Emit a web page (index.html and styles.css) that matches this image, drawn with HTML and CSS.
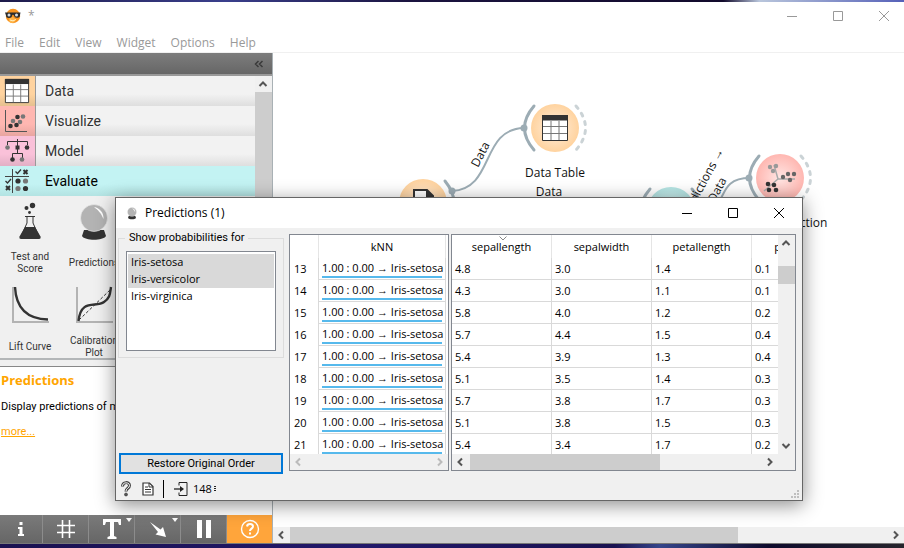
FILE: index.html
```html
<!DOCTYPE html>
<html lang="en">
<head>
<meta charset="utf-8">
<title>Orange</title>
<link rel="stylesheet" href="styles.css">
</head>
<body>
<svg class="defs" aria-hidden="true">
  <defs>
    <radialGradient id="gOrange"><stop offset="0" stop-color="#ffeedd"/><stop offset="1" stop-color="#ffd39f"/></radialGradient>
    <radialGradient id="gRed"><stop offset="0" stop-color="#ffe6e4"/><stop offset="1" stop-color="#ffb7b1"/></radialGradient>
    <radialGradient id="gCyan"><stop offset="0" stop-color="#dff6f6"/><stop offset="1" stop-color="#b3e3e2"/></radialGradient>
    <symbol id="up" viewBox="0 0 16 16"><path d="M4.500 10L8 6.500l3.500 3.500" fill="none" stroke="currentColor" stroke-width="2"/></symbol>
    <symbol id="down" viewBox="0 0 16 16"><path d="M4.500 6L8 9.500 11.500 6" fill="none" stroke="currentColor" stroke-width="2"/></symbol>
    <symbol id="left" viewBox="0 0 16 16"><path d="M10 4.500L6.500 8l3.500 3.500" fill="none" stroke="currentColor" stroke-width="2"/></symbol>
    <symbol id="right" viewBox="0 0 16 16"><path d="M6 4.500L9.500 8 6 11.500" fill="none" stroke="currentColor" stroke-width="2"/></symbol>
    <symbol id="min" viewBox="0 0 12 12"><path d="M1 6.500h10" stroke="currentColor"/></symbol>
    <symbol id="max" viewBox="0 0 12 12"><path d="M1.500 1.500h9v9h-9z" fill="none" stroke="currentColor"/></symbol>
    <symbol id="close" viewBox="0 0 12 12"><path d="M1 1l10 10M11 1L1 11" stroke="currentColor"/></symbol>
    <symbol id="table" viewBox="0 0 28 28"><path d="M1.500 1.500h25v25h-25z" fill="#fff" stroke="#333"/><path d="M1 1h26v5.500H1z" fill="#333"/><path d="M2 12.500h24M2 19.500h24M10 7v19M18 7v19" stroke="#777"/></symbol>
    <symbol id="ball" viewBox="0 0 36 40"><path d="M8 29h20l2 6c-3 5-21 5-24 0z" fill="#333"/><circle cx="18" cy="17" r="13.500" fill="#b3b3b3" stroke="#eee" stroke-width="0.600"/><path d="M18 6c6 1 10 6 9.500 12C25 12 22 9 18 6z" fill="#fff"/></symbol>
  </defs>
</svg>
<header class="titlebar">
  <svg class="logo" width="16" height="16" viewBox="0 0 16 16"><circle cx="8" cy="8" r="7.200" fill="#f7931e"/><circle cx="7" cy="12" r="3" fill="#ffb347"/><path d="M0 4.500h15.500l-.5 2.500a3 2.500 0 0 1-6 .5L8 6.500l-1 1a3 2.500 0 0 1-6 0z" fill="#2b2b2b"/><circle cx="4" cy="7" r="1.500" fill="#d5dce2"/><circle cx="11.500" cy="7" r="1.500" fill="#d5dce2"/><path d="M5 12q3 2 6-.5" fill="none" stroke="#fff3c4"/></svg>
  <span class="doc">*</span>
  <div class="winbtns">
    <button aria-label="Minimize"><svg width="12" height="12"><use href="#min"/></svg></button>
    <button aria-label="Maximize"><svg width="12" height="12"><use href="#max"/></svg></button>
    <button aria-label="Close"><svg width="12" height="12"><use href="#close"/></svg></button>
  </div>
</header>
<nav class="menu"><a href="#">File</a><a href="#">Edit</a><a href="#">View</a><a href="#">Widget</a><a href="#">Options</a><a href="#">Help</a></nav>
<main class="main">
  <aside class="side">
    <button class="collapse" aria-label="Collapse"><svg width="10" height="8" viewBox="0 0 10 8"><path d="M4.500 1L1.500 4l3 3M8.500 1l-3 3 3 3" fill="none" stroke="#3a3a3a" stroke-width="1.500"/></svg></button>
    <div class="tools">
      <div class="toolist">
        <button class="cat data"><span><svg width="26" height="26"><use href="#table"/></svg></span>Data</button>
        <button class="cat visual"><span><svg width="24" height="24" viewBox="0 0 24 24"><path d="M1.500 1v21.500H23" fill="none" stroke="#555"/><g fill="#333"><circle cx="6.500" cy="17" r="2.300"/><circle cx="12.500" cy="16" r="2.300"/><circle cx="13.500" cy="8" r="2.300"/></g><g fill="#777"><circle cx="9" cy="12" r="2.300"/><circle cx="16" cy="13" r="2.300"/><circle cx="19" cy="7.500" r="2.300"/></g></svg></span>Visualize</button>
        <button class="cat model"><span><svg width="26" height="26" viewBox="0 0 26 26"><path d="M3.500 7V3.500h20V7M13.500 1v7M8.500 20v-4.500h10V20M13.500 10v5" fill="none" stroke="#333"/><path d="M11.500 7.500h4v4h-4z" fill="#333"/><circle cx="3.500" cy="9.500" r="2.300" fill="#777"/><circle cx="23" cy="9.500" r="2.300" fill="#333"/><circle cx="8.500" cy="21.500" r="2.300" fill="#333"/><circle cx="18" cy="21.500" r="2.300" fill="#777"/></svg></span>Model</button>
        <button class="cat eval"><span><svg width="26" height="26" viewBox="0 0 26 26"><path d="M1 8.500h24M8.500 1v24" stroke="#444"/><path d="M11.500 3.500l2 2 3.500-4M1.500 13l2 2 3.500-4" fill="none" stroke="#333" stroke-width="1.300"/><path d="M19.500 2l4 4m0-4l-4 4M2 18l4 4m0-4l-4 4" stroke="#333" stroke-width="2"/><circle cx="14" cy="13" r="2.600" fill="#333"/><circle cx="21.500" cy="13" r="2.600" fill="#777"/><circle cx="14" cy="20.500" r="2.600" fill="#777"/><circle cx="21.500" cy="20.500" r="2.600" fill="#333"/></svg></span>Evaluate</button>
        <div class="widgets">
          <button><svg width="36" height="40" viewBox="0 0 36 40"><circle cx="14.500" cy="7" r="2" fill="#333"/><circle cx="20.500" cy="4.500" r="2.700" fill="#333"/><circle cx="17.500" cy="11.500" r="1.400" fill="#333"/><path d="M13 15.500h10M15 16v6L8.500 36.500h19L21 22v-6" fill="none" stroke="#333"/><path d="M13 26h10l5.500 9.500q.5 2.500-1.500 2.500H9q-2 0-1.500-2.500z" fill="#333"/></svg><span>Test and<br>Score</span></button>
          <button><svg width="36" height="40"><use href="#ball"/></svg><span>Predictions</span></button>
          <button><svg width="38" height="40" viewBox="0 0 38 40"><path d="M2 2v35h36" fill="none" stroke="#b3b3b3" stroke-width="2"/><path d="M4 2c1 21 12 32 33 32.500" fill="none" stroke="#333" stroke-width="2.400"/></svg><span>Lift Curve</span></button>
          <button><svg width="38" height="40" viewBox="0 0 38 40"><path d="M2 2v35h36" fill="none" stroke="#b3b3b3" stroke-width="2"/><path d="M4 35L36 4" stroke="#333" stroke-dasharray="3 2"/><path d="M3.500 36C6 13 21 23 29 17c6-4 6-8 7-15" fill="none" stroke="#333" stroke-width="2.400"/></svg><span>Calibration<br>Plot</span></button>
        </div>
      </div>
      <div class="vbar side-bar"><svg width="16" height="16"><use href="#up"/></svg><i></i></div>
    </div>
    <div class="split"></div>
    <article class="help">
      <h2>Predictions</h2>
      <p>Display predictions of models for an input data set.</p>
      <a href="#">more...</a>
    </article>
    <div class="actions">
      <button aria-label="Info"><svg width="24" height="24" viewBox="0 0 24 24"><path d="M10.500 5h3v3h-3zM9 10h4.500v7H15v2H9v-2h1.500v-5H9z" fill="#fff"/></svg></button>
      <button aria-label="Grid"><svg width="24" height="24" viewBox="0 0 24 24"><path d="M8.500 3v18M15.500 3v18M3 8.500h18M3 15.500h18" stroke="#fff" stroke-width="1.600"/></svg></button>
      <button aria-label="Text"><svg width="24" height="24" viewBox="0 0 24 24"><path d="M3 2h18v6h-2l-1-3h-4v14l2.500 1v2h-9v-2l2.500-1V5H6L5 8H3z" fill="#fff"/></svg><b></b></button>
      <button aria-label="Arrow"><svg width="24" height="24" viewBox="0 0 24 24"><path d="M4 5l10.500 7.500L17 10l3 10-10.500-2.500 2.500-2.500z" fill="#fff"/></svg><b></b></button>
      <button aria-label="Pause"><svg width="24" height="24" viewBox="0 0 24 24"><path d="M5 3h5v18H5zM14 3h5v18h-5z" fill="#fff"/></svg></button>
      <button class="on" aria-label="Help"><svg width="24" height="24" viewBox="0 0 24 24"><circle cx="12" cy="12" r="8.500" fill="none" stroke="#fff" stroke-width="1.400"/><path d="M9 9.500c.5-3.500 6-3 6 0 0 2-3 2.300-3 4.500M12 15.500v2" fill="none" stroke="#fff" stroke-width="2"/></svg></button>
    </div>
  </aside>
  <section class="work">
    <svg class="canvas" width="100%" height="100%">
      <g fill="none" stroke="#9cacb4" stroke-width="2">
        <path d="M179 138C222 136 207 76 251 75"/>
        <path d="M428 158C458 158 440 125 477 125"/>
      </g>
      <g transform="translate(282 75)">
        <circle r="24" fill="url(#gOrange)"/>
        <svg x="-14" y="-14" width="28" height="28"><use href="#table"/></svg>
        <path class="arc" d="M-21-22Q-40 0-21 22"/><circle class="dot" cx="-31" r="3.500"/>
        <path class="arc dash" d="M21-22Q40 0 21 22"/>
        <text y="49">Data Table</text>
      </g>
      <g transform="translate(150 150)">
        <circle r="24" fill="url(#gOrange)"/>
        <path d="M-9-13H4l6 6v18H-9z" fill="#fff" stroke="#333" stroke-width="2"/><path d="M3-14l8 8H3z" fill="#333"/>
        <path class="arc" d="M22-22Q40 0 22 22"/><circle class="dot" cx="29" cy="-12" r="3.500"/>
      </g>
      <g transform="translate(398 158)">
        <circle r="24" fill="url(#gCyan)"/>
        <path class="arc" d="M-21-22Q-40 0-21 22M21-22Q40 0 21 22"/>
      </g>
      <g transform="translate(507 125)">
        <circle r="24" fill="url(#gRed)"/>
        <path d="M-6-13L-2 1H15M-2 1l-14 12" fill="none" stroke="#aaa" stroke-width="1.500"/>
        <g fill="#999"><circle cx="-10" cy="-11" r="2.200"/><circle cx="-4" cy="-12" r="2.200"/><circle cx="-7" cy="-7" r="2.200"/></g>
        <g fill="#666"><circle cx="3" cy="-1" r="2.200"/><circle cx="8" cy="-4" r="2.200"/><circle cx="14" cy="-4" r="2.200"/><circle cx="10" cy="2" r="2.200"/></g>
        <g fill="#333"><circle cx="-12" cy="6" r="2.300"/><circle cx="-6" cy="7" r="2.300"/><circle cx="-11" cy="12" r="2.300"/><circle cx="-4" cy="12" r="2.300"/></g>
        <path class="arc" d="M-21-22Q-40 0-21 22"/><circle class="dot" cx="-31" r="3.500"/>
        <path class="arc dash" d="M21-22Q40 0 21 22"/>
        <text y="49">Linear Projection</text>
      </g>
      <text x="276" y="143">Data</text>
      <text class="start" transform="translate(205 115) rotate(-63)">Data</text>
      <text class="end" transform="translate(451 98) rotate(-62)">Predictions →</text>
      <text class="end" transform="translate(454 127) rotate(-62)">Data</text>
    </svg>
    <div class="hbar"><svg width="16" height="16"><use href="#left"/></svg><i></i><svg width="16" height="16"><use href="#right"/></svg></div>
  </section>
</main>

<section class="dialog" role="dialog" aria-labelledby="dlg">
  <header class="dtitle">
    <svg width="12" height="14"><use href="#ball"/></svg>
    <h1 id="dlg">Predictions (1)</h1>
    <div class="winbtns">
      <button aria-label="Minimize dialog"><svg width="12" height="12"><use href="#min"/></svg></button>
      <button aria-label="Maximize dialog"><svg width="12" height="12"><use href="#max"/></svg></button>
      <button aria-label="Close dialog"><svg width="12" height="12"><use href="#close"/></svg></button>
    </div>
  </header>
  <div class="dbody">
    <div class="left">
      <fieldset>
        <legend><label for="classes">Show probabibilities for</label></legend>
        <select id="classes" multiple size="5"><option selected>Iris-setosa</option><option selected>Iris-versicolor</option><option>Iris-virginica</option></select>
      </fieldset>
      <button class="restore">Restore Original Order</button>
    </div>
    <div class="frame preds">
      <div class="view">
        <table>
          <thead><tr><th class="num"></th><th>kNN</th></tr></thead>
          <tbody>
            <tr><th>13</th><td><span>1.00 : 0.00 → Iris-setosa</span></td></tr>
            <tr><th>14</th><td><span>1.00 : 0.00 → Iris-setosa</span></td></tr>
            <tr><th>15</th><td><span>1.00 : 0.00 → Iris-setosa</span></td></tr>
            <tr><th>16</th><td><span>1.00 : 0.00 → Iris-setosa</span></td></tr>
            <tr><th>17</th><td><span>1.00 : 0.00 → Iris-setosa</span></td></tr>
            <tr><th>18</th><td><span>1.00 : 0.00 → Iris-setosa</span></td></tr>
            <tr><th>19</th><td><span>1.00 : 0.00 → Iris-setosa</span></td></tr>
            <tr><th>20</th><td><span>1.00 : 0.00 → Iris-setosa</span></td></tr>
            <tr><th>21</th><td><span>1.00 : 0.00 → Iris-setosa</span></td></tr>
          </tbody>
        </table>
      </div>
      <div class="hbar off"><svg width="16" height="16"><use href="#left"/></svg><svg width="16" height="16"><use href="#right"/></svg></div>
    </div>
    <div class="frame values">
      <div class="row">
        <div class="view">
          <table>
            <thead><tr><th class="sorted">sepallength<svg width="8" height="5" viewBox="0 0 8 5"><path d="M.5.5L4 4 7.500.5" fill="none" stroke="#888"/></svg></th><th>sepalwidth</th><th>petallength</th><th>petalwidth</th></tr></thead>
            <tbody>
              <tr><td>4.8</td><td>3.0</td><td>1.4</td><td>0.1</td></tr>
              <tr><td>4.3</td><td>3.0</td><td>1.1</td><td>0.1</td></tr>
              <tr><td>5.8</td><td>4.0</td><td>1.2</td><td>0.2</td></tr>
              <tr><td>5.7</td><td>4.4</td><td>1.5</td><td>0.4</td></tr>
              <tr><td>5.4</td><td>3.9</td><td>1.3</td><td>0.4</td></tr>
              <tr><td>5.1</td><td>3.5</td><td>1.4</td><td>0.3</td></tr>
              <tr><td>5.7</td><td>3.8</td><td>1.7</td><td>0.3</td></tr>
              <tr><td>5.1</td><td>3.8</td><td>1.5</td><td>0.3</td></tr>
              <tr><td>5.4</td><td>3.4</td><td>1.7</td><td>0.2</td></tr>
            </tbody>
          </table>
        </div>
        <div class="vbar"><svg width="16" height="16"><use href="#up"/></svg><i></i><svg width="16" height="16"><use href="#down"/></svg></div>
      </div>
      <div class="hbar"><svg width="16" height="16"><use href="#left"/></svg><i></i><svg width="16" height="16"><use href="#right"/></svg></div>
    </div>
  </div>
  <footer class="status">
    <button aria-label="Help on Predictions"><svg width="12" height="16" viewBox="0 0 12 16"><path d="M2.500 5.500C2.500.5 9.500.5 9.500 4.500 9.500 7.500 6 7 6 10.500" fill="none" stroke="#444" stroke-width="3"/><path d="M2.500 4.800C2.500 1 9.500.8 9.500 4.500 9.500 7.500 6 7 6 10" fill="none" stroke="#fff" stroke-width="1"/><circle cx="6" cy="13.500" r="1.500" fill="#555" stroke="#333" stroke-width=".6"/></svg></button>
    <button aria-label="Report"><svg width="12" height="14" viewBox="0 0 12 14"><path d="M1 1h6.500L11 4.500V13H1z" fill="#fff" stroke="#333" stroke-width="1.200"/><path d="M7 1v4h4M3 5h3M3 7.500h6M3 10h6" fill="none" stroke="#333"/></svg></button>
    <span class="sep"></span>
    <svg width="14" height="14" viewBox="0 0 14 14"><path d="M5 3.500V.5h8v13H5v-3" fill="none" stroke="#222"/><path d="M0 7h8" stroke="#222" stroke-width="1.300"/><path d="M6 4l4 3-4 3z" fill="#222"/></svg>
    <span class="count">148</span>
    <svg class="dots" width="2" height="6" viewBox="0 0 2 6"><path d="M1 0v1M1 2v1M1 4v1" stroke="#222" stroke-width="2"/></svg>
    <svg class="grip" width="9" height="9" viewBox="0 0 9 9"><path d="M6 0h2v2H6zM3 3h2v2H3zM6 3h2v2H6zM0 6h2v2H0zM3 6h2v2H3zM6 6h2v2H6z" fill="#bfbfbf"/></svg>
  </footer>
</section>
</body>
</html>
```
FILE: styles.css
```css
* { box-sizing: border-box; }
body {
  margin: 0;
  height: 100vh;
  display: flex;
  flex-direction: column;
  position: relative;
  overflow: hidden;
  padding: 2px 0 4px;
  background:
    linear-gradient(90deg, #1d1a4a, #3a3f8c 25%, #1b1440 45%, #120a2c 80%, #b9c6dc 84%, #5560b8) top / 100% 2px no-repeat,
    linear-gradient(90deg, #1a1150, #22186a 40%, #1a1150 68%, #35458a 73%, #0e0a2c 85%, #26242c) bottom / 100% 4px no-repeat,
    #fff;
  color: #000;
  font: 12px/16px "Open Sans", "Noto Sans", sans-serif;
}
button { border: 0; padding: 0; margin: 0; background: none; color: inherit; font: inherit; }
svg { flex: none; display: block; }
.defs { position: absolute; width: 0; height: 0; }

.titlebar { display: flex; align-items: center; height: 28px; padding-left: 5px; color: #999; }
.doc { padding-left: 7px; }
.winbtns { display: flex; margin-left: auto; }
.winbtns button { width: 46px; display: flex; justify-content: center; }
.titlebar .winbtns { margin-right: -3px; }
.menu { display: flex; gap: 15px; height: 23px; padding: 5px 5px 0; border-bottom: 1px solid #f0f0f0; }
.menu a { color: #999; text-decoration: none; }

.main { flex: 1; min-height: 0; display: flex; border-bottom: 1px solid #777; }
.side { width: 273px; display: flex; flex-direction: column; border-right: 1px solid #a9b1b5; background: #f0f0f0; font-family: Roboto, sans-serif; }
.collapse { height: 21px; display: flex; align-items: center; justify-content: flex-end; padding-right: 8px; background: linear-gradient(#7d7d7d, #666); flex: none; }
.tools { display: flex; height: 286px; border-top: 2px solid #999; border-bottom: 2px solid #b3b6b8; }
.toolist { flex: 1; overflow: hidden; }
.cat { display: flex; align-items: center; gap: 9px; width: 100%; height: 30px; font-size: 14px; color: #333; background: linear-gradient(#f2f2f2 60%, #dedede); }
.cat span { width: 36px; height: 30px; display: flex; align-items: center; padding-left: 4px; border-right: 1px solid #999; }
.data span { background: linear-gradient(#ffd39f 60%, #e6c08f); }
.visual span { background: linear-gradient(#ffb7b1 60%, #e8a5a0); }
.model span { background: linear-gradient(#fac1d9 60%, #e2afc5); }
.eval { background: linear-gradient(#c3f3f3 60%, #b3e3e2); color: #000; }
.eval span { border-color: transparent; }
.widgets { display: grid; grid-template-columns: repeat(2, 60px); grid-auto-rows: 83px; gap: 1px 4px; padding-top: 5px; }
.widgets button { display: flex; flex-direction: column; align-items: center; font-size: 10px; line-height: 12px; color: #333; }
.widgets span { height: 44px; display: flex; align-items: center; text-align: center; }
.vbar { width: 16px; display: flex; flex-direction: column; background: #f0f0f0; color: #555; }
.vbar i, .hbar i { background: #cdcdcd; }
.side-bar { width: 17px; }
.side-bar i { flex: 1; }
.split { height: 7px; border-bottom: 1px solid #888; flex: none; }
.help { flex: 1; padding: 4px 1px; background: #fff; font-size: 11px; white-space: nowrap; overflow: hidden; }
.help h2 { margin: 0 0 10px; font: 700 13px/18px "Open Sans", sans-serif; color: #ffa500; }
.help p { margin: 0 0 9px; }
.help a { color: #ffa500; }
.actions { display: flex; height: 28px; background: linear-gradient(#7a7a7a, #666); flex: none; }
.actions button { flex: 1; display: flex; align-items: center; justify-content: center; position: relative; border-right: 1px solid #8c8c8c; }
.actions button:first-child { flex: 0 0 43px; }
.actions .on { background: #ffa53b; border: 0; }
.actions b { position: absolute; top: 3px; right: 2px; border: 3px solid transparent; border-top: 4px solid #fff; border-bottom: 0; }

.work { flex: 1; min-width: 0; display: flex; flex-direction: column; }
.canvas { flex: 1; min-height: 0; }
.canvas text { text-anchor: middle; fill: #111; }
.canvas .start { text-anchor: start; }
.canvas .end { text-anchor: end; }
.arc { fill: none; stroke: #9cacb4; stroke-width: 3; stroke-linecap: round; }
.dash { stroke: #cbd3d6; stroke-dasharray: 3 6; }
.dot { fill: #9cacb4; }
.hbar { display: flex; justify-content: space-between; height: 16px; background: #f0f0f0; color: #555; flex: none; }
.hbar.off { color: #bbb; }
.work .hbar i { width: 71%; margin-left: 1px; margin-right: auto; }

.dialog {
  position: absolute; left: 115px; top: 197px; width: 688px;
  border: 1px solid #666; background: #f0f0f0;
  box-shadow: 0 4px 18px rgba(0, 0, 0, .45);
}
.dtitle { display: flex; align-items: center; height: 30px; padding-left: 10px; gap: 7px; background: #fff; }
.dtitle h1 { margin: 0; font-size: 12px; font-weight: 400; }
.dbody { display: flex; gap: 2px; padding: 6px 6px 0 2px; }
.left { width: 166px; display: flex; flex-direction: column; justify-content: space-between; margin-right: 3px; }
fieldset { margin: -4px 0 0; padding: 5px 7px 6px; border: 1px solid #dcdcdc; min-width: 0; }
legend { padding: 0 4px; margin-left: -1px; font: 11px/16px Roboto, sans-serif; }
select { display: block; width: 150px; height: 100px; padding: 2px 1px 1px; border: 1px solid #828790; border-radius: 0; background: #fff; font: inherit; outline: 0; overflow: hidden; }
option { height: 17px; min-height: 17px; padding: 0 3px; line-height: 17px; font-size: 11px; color: #000; }
option:checked { background: linear-gradient(#d9d9d9, #d9d9d9); color: #000; }
.restore { height: 21px; margin: 0 1px -3px; border: 2px solid #0078d7; background: #e1e1e1; font: 11px/16px Roboto, sans-serif; }
.frame { border: 1px solid #828790; background: #fff; }
.preds { width: 160px; }
.values { flex: 1; min-width: 0; }
.row { display: flex; }
.view { height: 219px; flex: 1; min-width: 0; overflow: hidden; }
table { border-collapse: separate; border-spacing: 0; table-layout: fixed; font-size: 11px; }
tr { height: 22px; }
th, td { padding: 0; font-weight: 400; line-height: 16px; white-space: nowrap; overflow: hidden; }
thead tr { height: 23px; }
thead th { border-right: 1px solid #e5e5e5; }
td { border-right: 1px solid #d9d9d9; border-bottom: 1px solid #d9d9d9; }
.preds table { width: 156px; }
.num { width: 29px; }
.preds tbody th { border-right: 1px solid #d9d9d9; text-align: left; padding-left: 4px; }
.preds td { padding: 1px 3px 0; }
.preds td span { display: block; height: 18px; border-bottom: 2px solid #56b9ec; }
.values table { width: 400px; }
.values td { padding-left: 3px; }
.sorted { position: relative; }
.sorted svg { position: absolute; left: 47px; top: 1px; }
.values .vbar { width: 17px; }
.values .vbar i { height: 18px; margin: 15px 0 auto; }
.values .hbar { padding-right: 17px; }
.values .hbar i { width: 190px; margin-left: 2px; margin-right: auto; }
.status { display: flex; align-items: center; height: 29px; padding: 6px 2px 0 4px; }
.status button { margin-right: 10px; }
.sep { width: 1px; height: 18px; margin: 0 10px 0 -1px; background: #000; }
.count { margin: 0 2px 0 5px; font-size: 11px; }
.grip { margin-left: auto; align-self: flex-end; margin-bottom: 1px; }
```
